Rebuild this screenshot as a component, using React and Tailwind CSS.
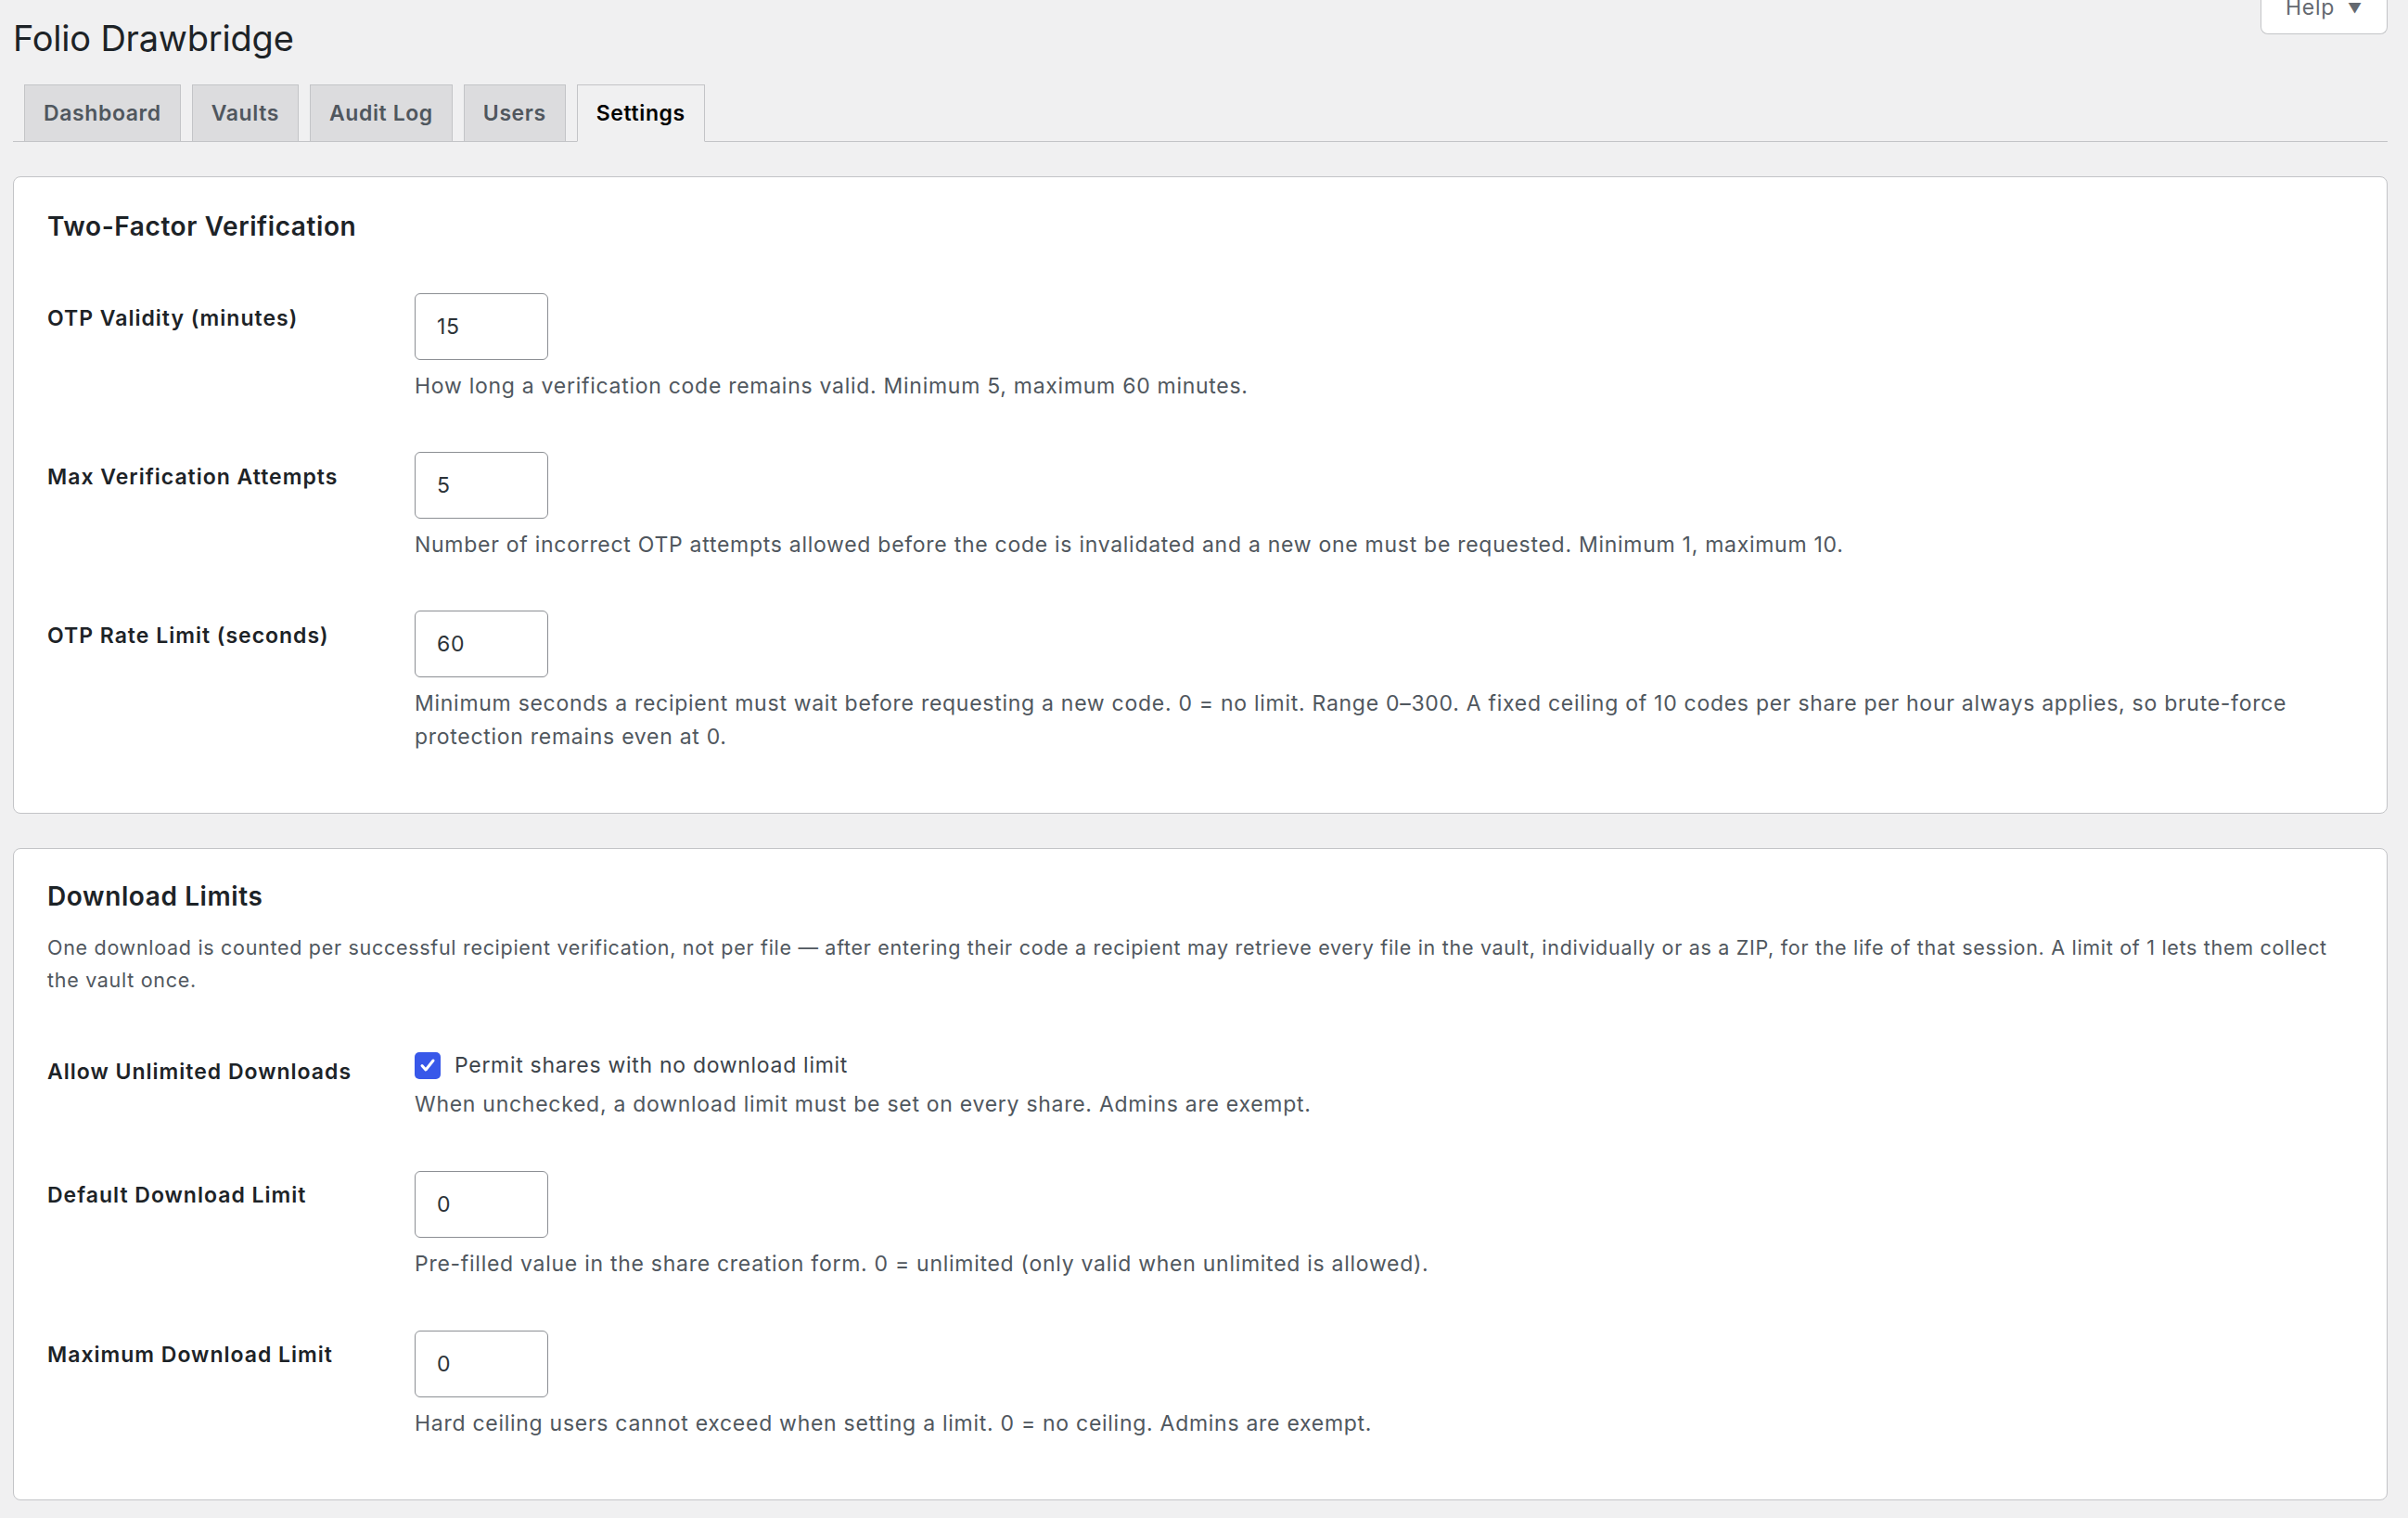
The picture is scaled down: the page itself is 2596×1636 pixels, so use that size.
import { useState } from "react";

const tabs = ["Dashboard", "Vaults", "Audit Log", "Users", "Settings"];

function NumberField({ value, help }) {
  return (
    <div className="flex flex-col">
      <input
        type="text"
        defaultValue={value}
        className="w-[144px] h-[72px] border border-[#8c8f94] rounded-[6px] bg-white pl-[23px] text-[23px] tracking-[0.7px] text-[#2c3338] outline-none"
      />
      <p className="mt-[10px] text-[23px] leading-[36px] tracking-[0.72px] text-[#50575e]">{help}</p>
    </div>
  );
}

function Row({ label, top = "pt-[12px]", children }) {
  return (
    <div className="flex">
      <div className={`w-[396px] shrink-0 ${top}`}>
        <span className="text-[23px] leading-[30px] font-semibold tracking-[1px] text-[#1d2327]">{label}</span>
      </div>
      <div className="flex-1">{children}</div>
    </div>
  );
}

function App() {
  const [active, setActive] = useState("Settings");
  const [unlimited, setUnlimited] = useState(true);

  return (
    <div
      className="min-h-[1636px] bg-[#f0f0f1] pl-[14px] pr-[22px] relative"
      style={{ fontFamily: "Inter, 'Noto Sans', sans-serif" }}
    >
      {/* help tab */}
      <button className="absolute right-[22px] top-0 w-[137px] h-[37px] bg-white border border-t-0 border-[#c3c4c7] rounded-b-[8px] flex items-end justify-center gap-[14px] pb-[16px] text-[23px] leading-[23px] tracking-[0.7px] text-[#646970]">
        <span>Help</span>
        <span className="text-[15px] leading-[15px] mb-[4px]">▼</span>
      </button>

      <h1 className="pt-[16px] text-[38px] leading-[50px] font-normal text-[#1d2327] tracking-[-0.2px]">
        Folio Drawbridge
      </h1>

      {/* tabs */}
      <div className="mt-[25px] flex gap-[12px] pl-[12px] border-b border-[#c3c4c7] h-[62px]">
        {tabs.map((t) =>
          t === active ? (
            <div
              key={t}
              onClick={() => setActive(t)}
              className="px-[20px] h-[62px] -mb-px flex items-center border border-[#c3c4c7] border-b-[#f0f0f1] bg-[#f0f0f1] text-[23px] font-semibold tracking-[0.6px] text-black cursor-pointer"
            >
              {t}
            </div>
          ) : (
            <div
              key={t}
              onClick={() => setActive(t)}
              className="px-[20px] h-[61px] flex items-center border border-b-0 border-[#c3c4c7] bg-[#dcdcde] text-[23px] font-semibold tracking-[0.6px] text-[#50575e] cursor-pointer"
            >
              {t}
            </div>
          )
        )}
      </div>

      {/* ---------- two factor ---------- */}
      <div className="mt-[37px] bg-white border border-[#c3c4c7] rounded-[8px] px-[36px] pt-[35px] pb-[64px]">
        <h2 className="text-[28px] leading-[36px] font-semibold tracking-[0.6px] text-[#1d2327]">Two-Factor Verification</h2>
        <div className="mt-[54px] flex flex-col gap-[53px]">
          <Row label="OTP Validity (minutes)">
            <NumberField
              value="15"
              help="How long a verification code remains valid. Minimum 5, maximum 60 minutes."
            />
          </Row>
          <Row label="Max Verification Attempts">
            <NumberField
              value="5"
              help="Number of incorrect OTP attempts allowed before the code is invalidated and a new one must be requested. Minimum 1, maximum 10."
            />
          </Row>
          <Row label="OTP Rate Limit (seconds)">
            <NumberField
              value="60"
              help="Minimum seconds a recipient must wait before requesting a new code. 0 = no limit. Range 0–300. A fixed ceiling of 10 codes per share per hour always applies, so brute-force protection remains even at 0."
            />
          </Row>
        </div>
      </div>

      {/* ---------- download limits ---------- */}
      <div className="mt-[37px] bg-white border border-[#c3c4c7] rounded-[8px] px-[36px] pt-[33px] pb-[64px]">
        <h2 className="text-[28px] leading-[36px] font-semibold tracking-[0.6px] text-[#1d2327]">Download Limits</h2>
        <p className="mt-[20px] text-[21.5px] leading-[35px] tracking-[0.7px] text-[#50575e]">
          One download is counted per successful recipient verification, not per file — after entering their code a
          recipient may retrieve every file in the vault, individually or as a ZIP, for the life of that session. A
          limit of 1 lets them collect the vault once.
        </p>
        <div className="mt-[59px] flex flex-col gap-[54px]">
          <Row label="Allow Unlimited Downloads" top="pt-[7px]">
            <label className="flex items-center gap-[15px] cursor-pointer" onClick={() => setUnlimited(!unlimited)}>
              <span
                className={`w-[28px] h-[29px] rounded-[5px] flex items-center justify-center ${
                  unlimited ? "bg-[#3858e9]" : "bg-white border border-[#8c8f94]"
                }`}
              >
                {unlimited && (
                  <svg width="20" height="20" viewBox="0 0 20 20" fill="none">
                    <path d="M4 10.5l4 4.5 8-10" stroke="white" strokeWidth="3" strokeLinecap="round" strokeLinejoin="round" />
                  </svg>
                )}
              </span>
              <span className="text-[23px] leading-[30px] tracking-[0.7px] text-[#3c434a]">Permit shares with no download limit</span>
            </label>
            <p className="mt-[9px] text-[23px] leading-[36px] tracking-[0.72px] text-[#50575e]">
              When unchecked, a download limit must be set on every share. Admins are exempt.
            </p>
          </Row>
          <Row label="Default Download Limit" top="pt-[11px]">
            <NumberField
              value="0"
              help="Pre-filled value in the share creation form. 0 = unlimited (only valid when unlimited is allowed)."
            />
          </Row>
          <Row label="Maximum Download Limit" top="pt-[11px]">
            <NumberField
              value="0"
              help="Hard ceiling users cannot exceed when setting a limit. 0 = no ceiling. Admins are exempt."
            />
          </Row>
        </div>
      </div>
    </div>
  );
}

export default App;
